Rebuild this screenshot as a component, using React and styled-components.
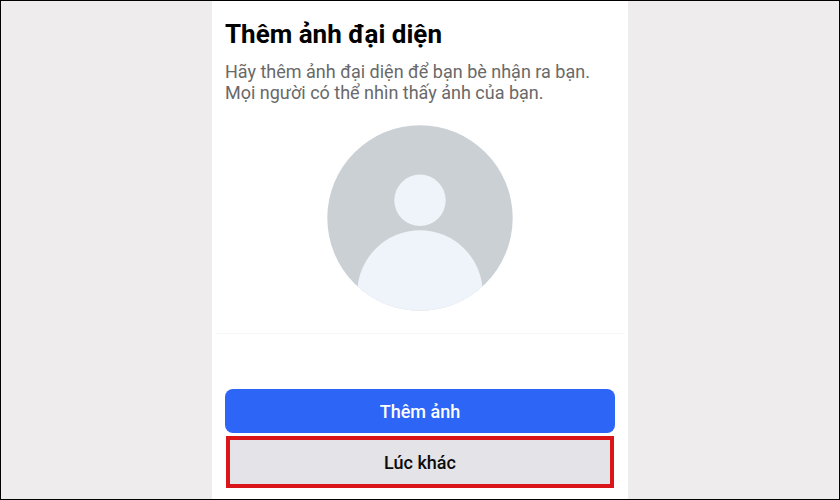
import styled, { createGlobalStyle } from "styled-components";

const App = () => {
  return (
    <>
      <GlobalStyle />
      <StyledPage>
        <StyledScreen>
          <StyledHeader>
            <h1>Thêm ảnh đại diện</h1>
            <p>
              Hãy thêm ảnh đại diện để bạn bè nhận ra bạn. Mọi người có thể nhìn
              thấy ảnh của bạn.
            </p>
          </StyledHeader>
          <Avatar />
          <StyledLine />
          <StyledActions>
            <StyledButton type="button" $primary>
              Thêm ảnh
            </StyledButton>
            <StyledHighlight>
              <StyledButton type="button">Lúc khác</StyledButton>
            </StyledHighlight>
          </StyledActions>
        </StyledScreen>
      </StyledPage>
    </>
  );
};

const Avatar = () => (
  <StyledAvatar viewBox="0 0 186 186" aria-hidden="true">
    <clipPath id="avatar-clip">
      <circle cx="93" cy="93" r="92.7" />
    </clipPath>
    <g clipPath="url(#avatar-clip)">
      <rect width="186" height="186" fill="#cbd0d5" />
      <circle cx="93" cy="75.3" r="25.7" fill="#eff4fa" />
      <circle cx="93" cy="168" r="62.7" fill="#eff4fa" />
    </g>
  </StyledAvatar>
);

const GlobalStyle = createGlobalStyle`
  * {
    box-sizing: border-box;
  }

  body {
    margin: 0;
    font-family: Roboto, "Liberation Sans", sans-serif;
  }
`;

const StyledPage = styled.div`
  display: flex;
  justify-content: center;
  min-height: 100vh;
  border: 1px solid #000;
  background: #eeeced;
`;

const StyledScreen = styled.main`
  display: flex;
  flex-direction: column;
  width: 100%;
  max-width: 416px;
  background: #fff;
`;

const StyledHeader = styled.header`
  padding: 17px 13px 22px;

  h1 {
    margin: 0 0 11px;
    font-size: 26px;
    font-weight: 700;
    line-height: 32px;
    color: #000;
  }

  p {
    margin: 0;
    font-size: 18px;
    line-height: 21px;
    color: #696969;
  }
`;

const StyledAvatar = styled.svg`
  align-self: center;
  width: 186px;
  height: 186px;
`;

const StyledLine = styled.hr`
  width: calc(100% - 8px);
  margin: 22px auto 0;
  border: 0;
  border-top: 1px solid #f7f7f7;
`;

const StyledActions = styled.div`
  display: flex;
  flex-direction: column;
  gap: 3px;
  padding: 55px 13px 11px;
`;

const StyledButton = styled.button`
  display: block;
  width: 100%;
  height: 44px;
  padding: 0;
  border: 0;
  border-radius: ${({ $primary }) => ($primary ? "8px" : "0")};
  background: ${({ $primary }) => ($primary ? "#2d65f6" : "#e3e3e8")};
  color: ${({ $primary }) => ($primary ? "#fff" : "#0b0b0b")};
  font-family: inherit;
  font-size: 18px;
  font-weight: 500;
  cursor: pointer;
`;

const StyledHighlight = styled.div`
  margin: 0 1px;
  border: 4px solid #d9151a;
`;

export default App;
